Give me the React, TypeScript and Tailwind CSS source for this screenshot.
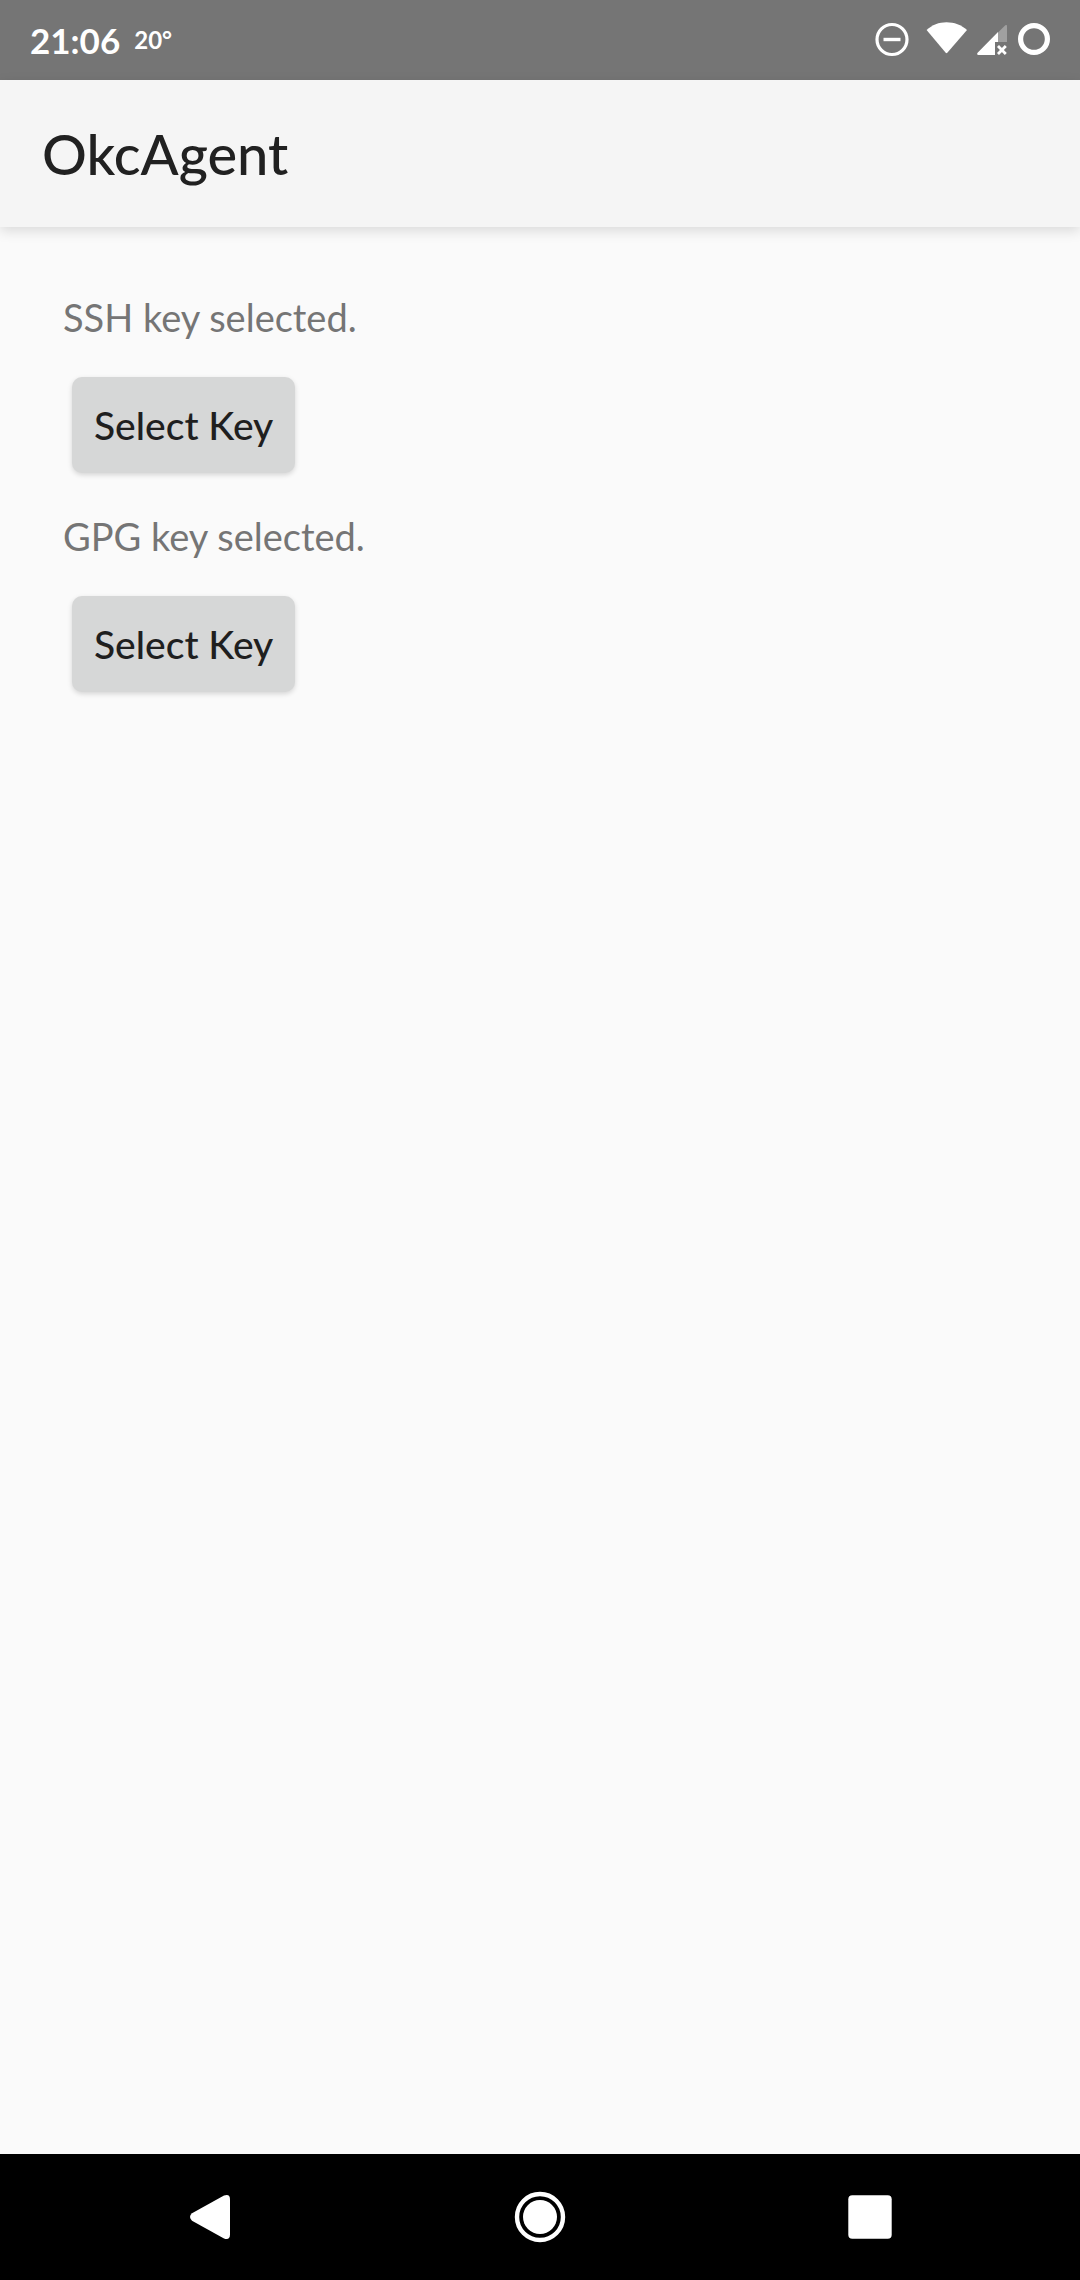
function StatusBar() {
  return (
    <header className="flex h-20 items-center justify-between bg-[#757575] px-[30px] text-white">
      <div className="flex items-center gap-[14px] font-bold">
        <span className="text-[35px] leading-10">21:06</span>
        <span className="text-[24px] leading-8">20°</span>
      </div>
      <div className="flex items-center gap-2.5">
        <svg className="mr-1.5" width="36" height="36" viewBox="0 0 36 36" aria-label="Do not disturb">
          <circle cx="19" cy="17.5" r="15" fill="none" stroke="#fff" strokeWidth="3.2" />
          <path d="M10.500 17.5h17" stroke="#fff" strokeWidth="3.4" />
        </svg>
        <svg width="42" height="36" viewBox="0 0 42 36" aria-label="Wi-Fi">
          <path d="M1.600 8C7 3 14 .3 21.500 .3S36.500 3 42 8L22.300 30.800q-.8.8-1.600 0Z" fill="#fff" />
        </svg>
        <svg width="30" height="36" viewBox="0 0 30 36" aria-label="No mobile signal">
          <path d="M21 10.500 28.300 3.300Q30 2.300 30 4.200V20H21Z" fill="#a0a0a0" />
          <path d="M21 10V20H18V33H1.500Q-.6 32.500.6 30.800Z" fill="#fff" />
          <path d="m21 24 7.800 8M28.800 24 21 32" stroke="#fff" strokeWidth="2.800" />
        </svg>
        <svg width="33" height="36" viewBox="0 0 33 36" aria-label="Battery">
          <circle cx="17" cy="17" r="13.400" fill="none" stroke="#fff" strokeWidth="5.200" />
        </svg>
      </div>
    </header>
  );
}

function KeySection({ status }: { status: string }) {
  return (
    <section className="flex flex-col items-start">
      <p className="text-[38px] leading-[44px] text-[#757575]">{status}</p>
      <button
        type="button"
        className="mx-[9px] mt-[38px] mb-[41px] h-24 rounded-[10px] bg-[#d6d7d7] px-[22px] text-[39px] font-medium leading-[44px] text-[#1f1f1f] shadow-[0_2px_5px_rgba(0,0,0,0.15)]"
      >
        Select Key
      </button>
    </section>
  );
}

function NavigationBar() {
  return (
    <nav className="flex h-[126px] bg-black px-[45px]">
      <button type="button" aria-label="Back" className="flex flex-1 items-center justify-center">
        <svg width="40" height="44" viewBox="0 0 40 44">
          <path d="M2 18.300 34 .6Q40-1.500 40 4.500V39.500Q40 45.500 34 43.400L2 25.700Q-2 22 2 18.300Z" fill="#fff" />
        </svg>
      </button>
      <button type="button" aria-label="Home" className="flex flex-1 items-center justify-center">
        <svg width="52" height="52" viewBox="0 0 52 52">
          <circle cx="26" cy="26" r="23" fill="none" stroke="#fff" strokeWidth="4.400" />
          <circle cx="26" cy="26" r="17" fill="#fff" />
        </svg>
      </button>
      <button type="button" aria-label="Recent apps" className="flex flex-1 items-center justify-center">
        <svg width="44" height="44" viewBox="0 0 44 44">
          <rect x=".3" y=".3" width="43.400" height="43.400" rx="4" fill="#fff" />
        </svg>
      </button>
    </nav>
  );
}

export default function App() {
  return (
    <div className="flex min-h-screen flex-col bg-[#fafafa] font-['Lato',sans-serif]">
      <StatusBar />
      <div className="z-10 flex h-[147px] items-center bg-[#f5f5f5] px-[42px] shadow-[0_4px_12px_rgba(0,0,0,0.13)]">
        <h1 className="text-[56px] font-medium leading-[64px] text-[#212121]">OkcAgent</h1>
      </div>
      <main className="flex-1 px-[63px] pt-[68px]">
        <KeySection status="SSH key selected." />
        <KeySection status="GPG key selected." />
      </main>
      <NavigationBar />
    </div>
  );
}
